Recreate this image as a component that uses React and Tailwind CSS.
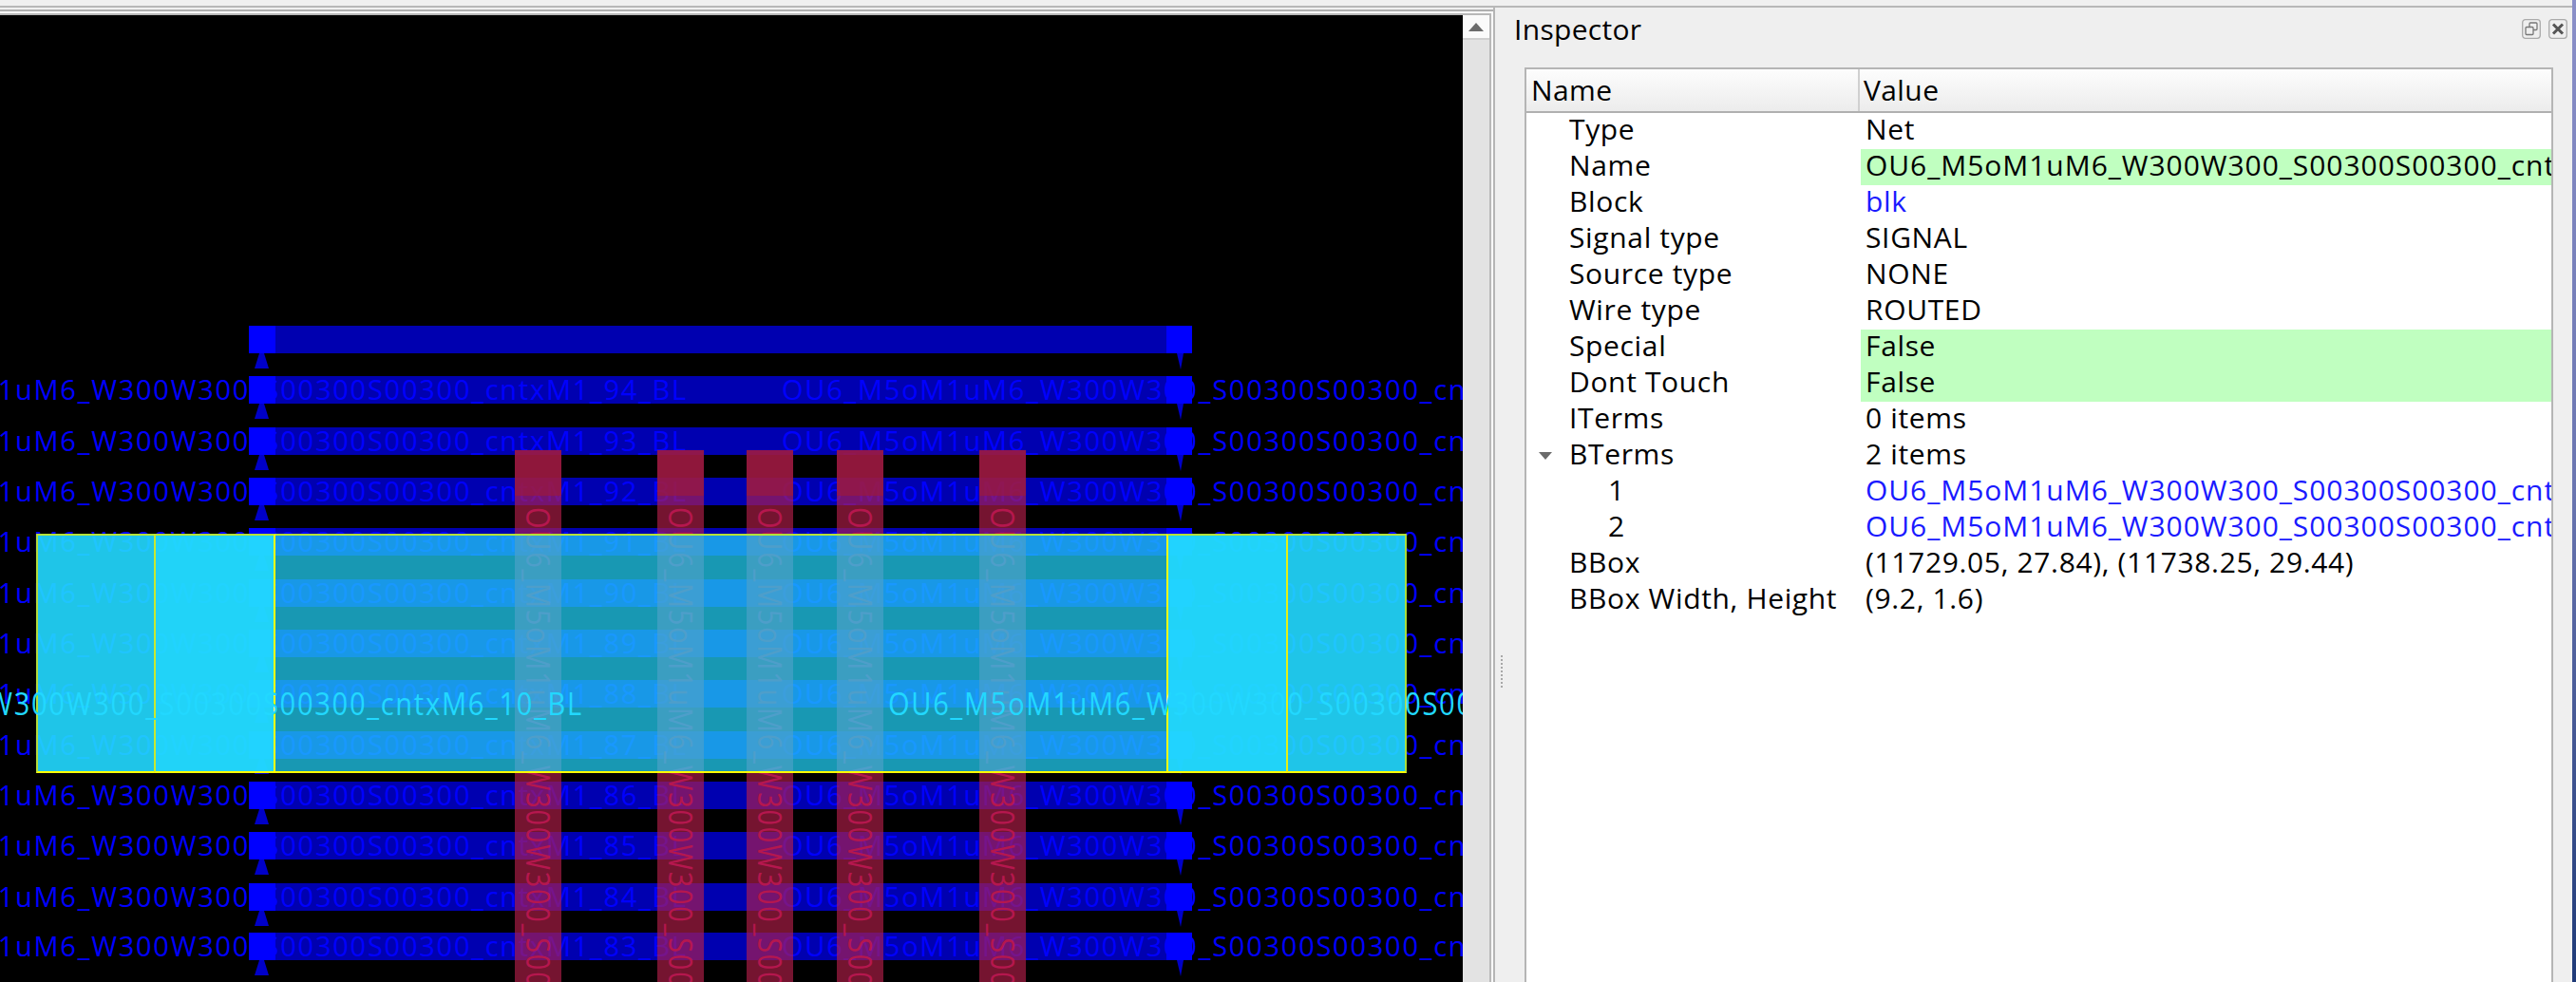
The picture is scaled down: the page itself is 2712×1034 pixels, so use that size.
const ROW_TOPS = [396, 450, 503, 556, 610, 663, 716, 770, 823, 876, 930, 982];
const ROW_NUMS = [94, 93, 92, 91, 90, 89, 88, 87, 86, 85, 84, 83];
const VBARS = [542, 692, 786, 881, 1031];
const NET = "OU6_M5oM1uM6_W300W300_S00300S00300";
const LABEL_FONT = { fontFamily: '"Open Sans", sans-serif', fontSize: 29, letterSpacing: "1.75px", lineHeight: "36px" };

function Track({ top }) {
  return (
    <>
      <div className="absolute left-[262px] w-[993px] h-[29px] bg-[#0000b0]" style={{ top }} />
      <div className="absolute left-[262px] w-[28px] h-[29px] bg-[#0000ff]" style={{ top }} />
      <div className="absolute left-[1228px] w-[27px] h-[29px] bg-[#0000ff]" style={{ top }} />
      <svg className="absolute left-[262px] w-[30px] h-[17px]" style={{ top: top + 29 }} viewBox="0 0 30 17">
        <polygon points="11,0 16,0 21,16 6,16" fill="#0000c8" />
      </svg>
      <svg className="absolute left-[1232px] w-[20px] h-[17px]" style={{ top: top + 29 }} viewBox="0 0 20 17">
        <polygon points="7,0 14,0 11,17" fill="#0000c8" />
      </svg>
    </>
  );
}

function RowLabels({ top, n }) {
  return (
    <>
      <div
        className="absolute right-[816px] whitespace-nowrap text-[#0000ff]"
        style={{ ...LABEL_FONT, top: top - 4 }}
      >
        {`${NET}_cntxM1_${n}_BL`}
      </div>
      <div
        className="absolute left-[823px] whitespace-nowrap text-[#0000ff]"
        style={{ ...LABEL_FONT, top: top - 4 }}
      >
        {`${NET}_cntxM1_${n}_BL`}
      </div>
    </>
  );
}

function VBar({ x }) {
  return (
    <>
      <div className="absolute top-[474px] w-[49px] h-[48px] bg-[#9f1941]/90" style={{ left: x }} />
      <div className="absolute top-[522px] bottom-0 w-[49px] bg-[#b71f4b]/[0.64] overflow-hidden" style={{ left: x }}>
        <div
          className="absolute left-[7px] top-[12px] w-[36px] whitespace-nowrap text-[#b5174e] [writing-mode:vertical-rl] [transform:scaleX(1.22)]"
          style={LABEL_FONT}
        >
          {NET}
        </div>
      </div>
    </>
  );
}

function PinBox({ left, width, border }) {
  return (
    <div
      className={`absolute top-[562px] h-[252px] bg-[#22d8ff]/70 box-border border-y-2 border-x-2 border-t-[#b4e23a] border-b-[#ffff00] ${border}`}
      style={{ left, width }}
    />
  );
}

function Canvas() {
  return (
    <div className="relative flex-1 bg-black overflow-hidden">
      <div className="absolute inset-x-0 top-[-16px] bottom-0">
        <Track top={343} />
        {ROW_TOPS.map((t) => (
          <Track key={t} top={t} />
        ))}
        {ROW_TOPS.map((t, i) => (
          <RowLabels key={t} top={t} n={ROW_NUMS[i]} />
        ))}
        {VBARS.map((x) => (
          <VBar key={x} x={x} />
        ))}
        <PinBox left={38} width={1443} border="border-l-[#b4dc3c] border-r-[#a9dc3c]" />
        <PinBox left={38} width={252} border="border-l-[#b4dc3c] border-r-[#ffff00]" />
        <PinBox left={162} width={128} border="border-l-[#c8e830] border-r-[#ffff00]" />
        <PinBox left={1228} width={253} border="border-l-[#ffff00] border-r-[#a9dc3c]" />
        <PinBox left={1228} width={128} border="border-l-[#ffff00] border-r-[#e8f010]" />
        <div
          className="absolute right-[926px] top-[722px] whitespace-nowrap text-[#22d8ff] origin-center [transform:scaleY(1.16)]"
          style={LABEL_FONT}
        >
          {`${NET}_cntxM6_10_BL`}
        </div>
        <div
          className="absolute left-[935px] top-[722px] whitespace-nowrap text-[#22d8ff] origin-center [transform:scaleY(1.16)]"
          style={LABEL_FONT}
        >
          {`${NET}_cntxM6_10_BL`}
        </div>
      </div>
    </div>
  );
}

function Scrollbar() {
  return (
    <div className="w-[28px] flex flex-col bg-[#e3e3e3]">
      <div className="h-[26px] bg-[#fafafa] border-b-2 border-[#cfcfcf] flex items-center justify-center">
        <svg width="16" height="9" viewBox="0 0 16 9">
          <polygon points="8,0 16,9 0,9" fill="#6b6b6b" />
        </svg>
      </div>
    </div>
  );
}

const ROWS = [
  { n: "Type", v: "Net" },
  { n: "Name", v: `${NET}_cntxM6_10_BL`, g: true, long: true },
  { n: "Block", v: "blk", l: true },
  { n: "Signal type", v: "SIGNAL" },
  { n: "Source type", v: "NONE" },
  { n: "Wire type", v: "ROUTED" },
  { n: "Special", v: "False", g: true },
  { n: "Dont Touch", v: "False", g: true },
  { n: "ITerms", v: "0 items" },
  { n: "BTerms", v: "2 items", open: true },
  { n: "1", v: "OU6_M5oM1uM6_W300W300_S00300S00300_cntxM6_10_BL/1", l: true, sub: true, long: true },
  { n: "2", v: "OU6_M5oM1uM6_W300W300_S00300S00300_cntxM6_10_BL/2", l: true, sub: true, long: true },
  { n: "BBox", v: "(11729.05, 27.84), (11738.25, 29.44)" },
  { n: "BBox Width, Height", v: "(9.2, 1.6)" },
];

function Row({ r }) {
  return (
    <div className="flex h-[38px] text-[30px] leading-[33px] tracking-[0.65px] text-black">
      <div className={`w-[352px] shrink-0 relative whitespace-nowrap ${r.sub ? "pl-[86px]" : "pl-[45px]"}`}>
        {r.open && (
          <svg className="absolute left-[13px] top-[15px]" width="14" height="8" viewBox="0 0 14 8">
            <polygon points="0,0 14,0 7,8" fill="#6b6b6b" />
          </svg>
        )}
        {r.n}
      </div>
      <div
        className={`flex-1 min-w-0 h-[38px] pl-[5px] whitespace-nowrap overflow-hidden ${r.g ? "bg-[#c0ffc0]" : ""} ${r.l ? "text-[#1a1aff]" : ""} ${r.long ? "tracking-[0.95px]" : ""}`}
      >
        {r.v}
      </div>
    </div>
  );
}

function Inspector() {
  return (
    <div className="flex-1 min-w-0 flex flex-col bg-[#efefef] pl-[31px] pr-[20px]">
      <div className="h-[63px] shrink-0 flex justify-between items-start pt-[5px]">
        <div className="text-[30px] leading-[36px] tracking-[0.3px] text-black -ml-[11px]">Inspector</div>
        <div className="flex gap-[8px] -mr-[15px] pt-[7px]">
          <svg width="20" height="21" viewBox="0 0 20 21" fill="none" stroke="#777" strokeWidth="1.3">
            <rect x="0.7" y="0.7" width="18.6" height="19.6" rx="3" stroke="#aaa" />
            <rect x="8" y="4" width="8" height="7.5" rx="1" />
            <rect x="4" y="8.5" width="8" height="8" rx="1" fill="#efefef" />
          </svg>
          <svg width="20" height="21" viewBox="0 0 20 21" fill="none">
            <rect x="0.7" y="0.7" width="18.6" height="19.6" rx="3" stroke="#aaa" strokeWidth="1.3" />
            <path d="M5 5.5 L15 15.5 M15 5.5 L5 15.5" stroke="#555" strokeWidth="3" />
          </svg>
        </div>
      </div>
      <div className="flex-1 min-h-0 bg-white border-x-2 border-t-2 border-[#b5b5b5] overflow-hidden">
        <div className="h-[46px] flex border-b-2 border-[#b0b0b0] bg-gradient-to-b from-[#fdfdfd] to-[#ececec] text-[30px] leading-[44px] tracking-[0.4px] text-black">
          <div className="w-[351px] shrink-0 pl-[5px] border-r-2 border-[#d0d0d0]">Name</div>
          <div className="flex-1 pl-[4px]">Value</div>
        </div>
        {ROWS.map((r) => (
          <Row key={r.n} r={r} />
        ))}
      </div>
    </div>
  );
}

export default function App() {
  return (
    <div
      className="w-[2712px] h-[1034px] overflow-hidden flex flex-col bg-[#f0f0f0]"
      style={{ fontFamily: '"Open Sans", sans-serif' }}
    >
      <div className="h-[6px] shrink-0" />
      <div className="h-[2px] shrink-0 bg-[#b8b8b8] mr-[4px]" />
      <div className="flex-1 min-h-0 flex">
        <div className="w-[1574px] shrink-0 flex flex-col pt-[2px] border-r-2 border-[#b5b5b5]">
          <div className="flex-1 min-h-0 flex flex-col border-t-2 border-[#b0b0b0] bg-[#f8f8f8] pt-[2px] pr-[2px]">
            <div className="flex-1 min-h-0 flex border-t-2 border-[#b8b8b8] border-r-2">
              <Canvas />
              <Scrollbar />
            </div>
          </div>
        </div>
        <div className="relative flex-1 min-w-0 flex">
          <Inspector />
          <div className="absolute left-[6px] top-[682px] w-[2px] h-[34px] border-l-2 border-dotted border-[#a8a8a8]" />
        </div>
        <div className="w-[4px] shrink-0 -mt-[8px] bg-gradient-to-b from-[#8a8fc8] via-[#6a75b0] to-[#1f3a78]" />
      </div>
    </div>
  );
}
